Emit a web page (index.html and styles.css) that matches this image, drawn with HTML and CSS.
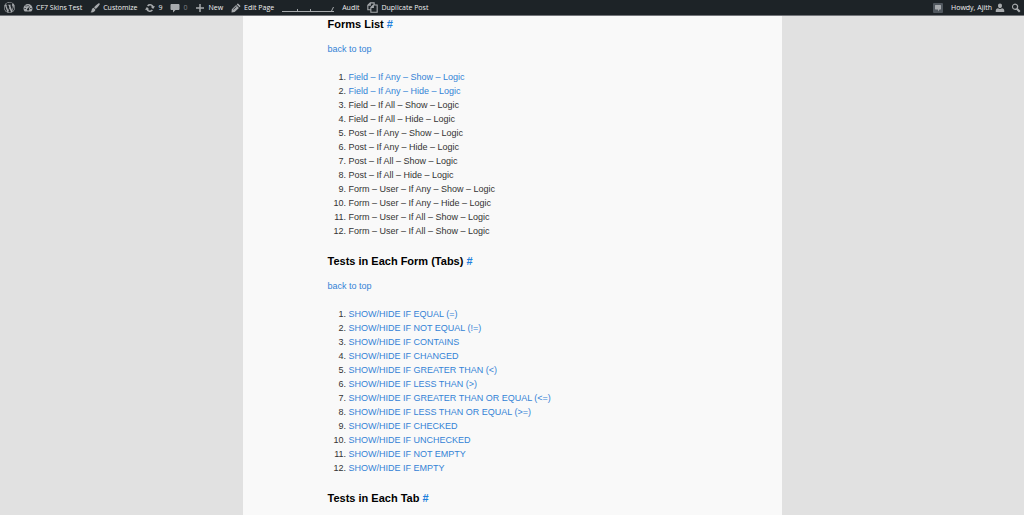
FILE: index.html
```html
<!DOCTYPE html>
<html lang="en">
<head>
    <meta charset="UTF-8">
    <meta name="viewport" content="width=device-width, initial-scale=1.0">
    <title>CF7 Skins Test</title>
    <link rel="stylesheet" href="styles.css">
</head>
<body>

<!-- Admin Bar -->
<nav class="admin-bar">
    <div class="bar-group">
        <a href="#" class="logo" aria-label="WordPress">
            <svg class="icon icon-wp" viewBox="0 0 20 20"><path d="M20 10c0-5.51-4.49-10-10-10C4.48 0 0 4.49 0 10c0 5.52 4.48 10 10 10 5.51 0 10-4.48 10-10zM7.78 15.37L4.37 6.22c.55-.02 1.17-.08 1.17-.08.5-.06.44-1.13-.06-1.11 0 0-1.45.11-2.37.11-.18 0-.37 0-.58-.01C4.12 2.69 6.87 1.11 10 1.11c2.33 0 4.45.87 6.05 2.34-.68-.11-1.65.39-1.65 1.58 0 .74.45 1.36.9 2.1.35.61.55 1.36.55 2.46 0 1.49-1.4 5-1.4 5l-3.03-8.37c.54-.02.82-.17.82-.17.5-.05.44-1.25-.06-1.22 0 0-1.44.12-2.38.12-.87 0-2.33-.12-2.33-.12-.5-.03-.56 1.2-.06 1.22l.92.08 1.26 3.41zM17.41 10c.24-.64.74-1.87.43-4.25.7 1.29 1.05 2.71 1.05 4.25 0 3.29-1.73 6.24-4.4 7.78.97-2.59 1.94-5.2 2.92-7.78zM6.1 18.09C3.12 16.65 1.11 13.53 1.11 10c0-1.3.23-2.48.72-3.59C3.25 10.3 4.67 14.2 6.1 18.09zm4.03-6.63l2.58 6.98c-.86.29-1.76.45-2.71.45-.79 0-1.57-.11-2.29-.33.81-2.38 1.62-4.74 2.42-7.1z"/></svg>
        </a>
        <a href="#">
            <svg class="icon" viewBox="0 0 20 20"><path fill-rule="evenodd" d="M3.500 17A9 9 0 1 1 16.500 17zM9 4h2v2.500H9zM4.500 6l1.400-1.400 1.600 1.600-1.400 1.400zM3 10h2.500v2H3zM14.500 10H17v2h-2.500zM14.600 5.200L11.800 11.300A2.200 2.200 0 1 1 9.500 10.800z"/></svg>
            CF7 Skins Test
        </a>
        <a href="#">
            <svg class="icon" viewBox="0 0 20 20"><path d="M19 1c.9.800.6 1.700.1 2.500-2 3-4.500 6-7.500 8.600L8 8.500c2.500-2.900 5.500-5.500 8.600-7.400.9-.5 1.700-.8 2.400-.1zM7.200 9.500l3.500 3.500c.2 4.200-4.700 6.700-10.200 5.500 1.600-.6 2.300-1.600 2.600-3.500.4-3 1.900-5.100 4.100-5.500z"/></svg>
            Customize
        </a>
        <a href="#">
            <svg class="icon" viewBox="0 0 20 20"><path d="M10 2c3.400 0 6.200 1.900 7.400 4.700l2.600-.2-3.800 5.500-4.700-4.700 2.500-.2A4.500 4.500 0 0 0 6.600 7.200L4 4.800A8 8 0 0 1 10 2zM3.800 8l4.700 4.700-2.500.2a4.500 4.500 0 0 0 7.400-.1l2.600 2.400A8 8 0 0 1 2.600 13.300L0 13.500z"/></svg>
            9
        </a>
        <a href="#" class="muted">
            <svg class="icon" viewBox="0 0 20 20"><path d="M3 2h14c1 0 2 1 2 2v8c0 1-1 2-2 2h-6l-5 5v-5H3c-1 0-2-1-2-2V4c0-1 1-2 2-2z"/></svg>
            <span>0</span>
        </a>
        <a href="#">
            <svg class="icon" viewBox="0 0 20 20"><path d="M8.500 2h3v6.500H18v3h-6.500V18h-3v-6.500H2v-3h6.500z"/></svg>
            New
        </a>
        <a href="#">
            <svg class="icon" viewBox="0 0 20 20"><path d="M14.500 1.500l4 4c.6.600.6 1 0 1.600L17 8.600 11.400 3l1.500-1.500c.6-.6 1-.6 1.600 0zM10.200 4.200l5.600 5.600-8.500 8L1 19l.6-6.300zM10.300 6.500L4.200 12.600l.9.900 6.100-6.100z" fill-rule="evenodd"/></svg>
            Edit Page
        </a>
        <a href="#" aria-label="Site stats">
            <svg class="sparkline" viewBox="0 0 52 10"><path d="M0 8.500h52M15.500 6v2M28.500 6v3M49.500 8l2-4"/></svg>
        </a>
        <a href="#">Audit</a>
        <a href="#">
            <svg class="icon icon-outline" viewBox="0 0 20 20"><path d="M6 14H1.500V6L6 1.500h7V5M6 1.500V6H1.500M7 18.500V10l4.500-4.500h7v13zM11.500 5.500V10H7"/></svg>
            Duplicate Post
        </a>
    </div>
    <div class="bar-group bar-right">
        <a href="#" class="notifications" aria-label="Notifications">
            <svg class="icon" viewBox="0 0 20 20"><rect class="badge" width="20" height="20" rx="2"/><path d="M5 4h10c.6 0 1 .4 1 1v7c0 .6-.4 1-1 1h-2l-3 4v-4H5c-.6 0-1-.4-1-1V5c0-.6.4-1 1-1z"/></svg>
        </a>
        <a href="#">
            Howdy, Ajith
            <svg class="icon" viewBox="0 0 20 20"><path d="M10 1c2.500 0 4 1.800 4 4.300S12.300 10 10 10 6 7.800 6 5.300 7.500 1 10 1zM6 10.500c2.300 1.800 5.700 1.800 8 0 2.700.5 4.500 2 4.500 4.500v3h-17v-3c0-2.500 1.800-4 4.500-4.500z"/></svg>
        </a>
        <a href="#" aria-label="Search">
            <svg class="icon" viewBox="0 0 20 20"><path fill-rule="evenodd" d="M8 1a6.500 6.500 0 0 1 5.600 9.700l5.400 5.300-3 3-5.300-5.400A6.500 6.500 0 1 1 8 1zm0 2.500a4 4 0 1 0 0 8 4 4 0 0 0 0-8z"/></svg>
        </a>
    </div>
</nav>

<!-- Page Content -->
<main class="page">
    <section>
        <h2>Forms List <a href="#forms-list">#</a></h2>
        <p><a href="#top">back to top</a></p>
        <ol>
            <li><a href="#">Field – If Any – Show – Logic</a></li>
            <li><a href="#">Field – If Any – Hide – Logic</a></li>
            <li>Field – If All – Show – Logic</li>
            <li>Field – If All – Hide – Logic</li>
            <li>Post – If Any – Show – Logic</li>
            <li>Post – If Any – Hide – Logic</li>
            <li>Post – If All – Show – Logic</li>
            <li>Post – If All – Hide – Logic</li>
            <li>Form – User – If Any – Show – Logic</li>
            <li>Form – User – If Any – Hide – Logic</li>
            <li>Form – User – If All – Show – Logic</li>
            <li>Form – User – If All – Show – Logic</li>
        </ol>
    </section>

    <section>
        <h2>Tests in Each Form (Tabs) <a href="#tabs">#</a></h2>
        <p><a href="#top">back to top</a></p>
        <ol>
            <li><a href="#">SHOW/HIDE IF EQUAL (=)</a></li>
            <li><a href="#">SHOW/HIDE IF NOT EQUAL (!=)</a></li>
            <li><a href="#">SHOW/HIDE IF CONTAINS</a></li>
            <li><a href="#">SHOW/HIDE IF CHANGED</a></li>
            <li><a href="#">SHOW/HIDE IF GREATER THAN (&lt;)</a></li>
            <li><a href="#">SHOW/HIDE IF LESS THAN (&gt;)</a></li>
            <li><a href="#">SHOW/HIDE IF GREATER THAN OR EQUAL (&lt;=)</a></li>
            <li><a href="#">SHOW/HIDE IF LESS THAN OR EQUAL (&gt;=)</a></li>
            <li><a href="#">SHOW/HIDE IF CHECKED</a></li>
            <li><a href="#">SHOW/HIDE IF UNCHECKED</a></li>
            <li><a href="#">SHOW/HIDE IF NOT EMPTY</a></li>
            <li><a href="#">SHOW/HIDE IF EMPTY</a></li>
        </ol>
    </section>

    <section>
        <h2>Tests in Each Tab <a href="#each-tab">#</a></h2>
    </section>
</main>

</body>
</html>
```
FILE: styles.css
```css
* {
    margin: 0;
    padding: 0;
    box-sizing: border-box;
}

body {
    display: flex;
    flex-direction: column;
    min-height: 100vh;
    background: #e1e1e1;
    color: #333;
    font-family: "Liberation Sans", Arial, sans-serif;
    font-size: 9px;
    line-height: 14px;
}

a {
    color: #3483d6;
    text-decoration: none;
}

a:hover {
    text-decoration: underline;
}

/* Admin bar */
.admin-bar {
    display: flex;
    justify-content: space-between;
    height: 16px;
    background: #1d2327;
    border-bottom: 1px solid #73757a;
    font-family: "Open Sans", "Noto Sans", sans-serif;
    font-size: 7px;
}

.bar-group {
    display: flex;
}

.admin-bar a {
    display: flex;
    align-items: center;
    gap: 3px;
    padding: 0 4px;
    color: #f0f0f1;
    white-space: nowrap;
}

.bar-right a {
    padding: 0 3px;
}

.bar-right .notifications {
    padding-right: 5px;
}

.icon {
    width: 10px;
    height: 10px;
    fill: #a7aaad;
}

.icon-wp {
    width: 11px;
    height: 11px;
}

.icon-outline {
    width: 11px;
    height: 11px;
    fill: none;
    stroke: #a7aaad;
    stroke-width: 2;
}

.badge {
    fill: #50575e;
}

.muted span {
    color: #7d8185;
}

.sparkline {
    width: 52px;
    height: 10px;
    fill: none;
    stroke: #a7aaad;
}

/* Content */
.page {
    flex: 1;
    width: 100%;
    max-width: 539px;
    margin: 0 auto;
    padding: 0 84px 0 85px;
    background: #f9f9f9;
}

section {
    margin-bottom: 15px;
}

h2 {
    margin-bottom: 10px;
    color: #000;
    font-size: 11px;
    line-height: 16px;
}

h2 a {
    color: #1e7fdc;
}

p {
    margin-bottom: 14px;
}

ol {
    padding-left: 21px;
}
```
